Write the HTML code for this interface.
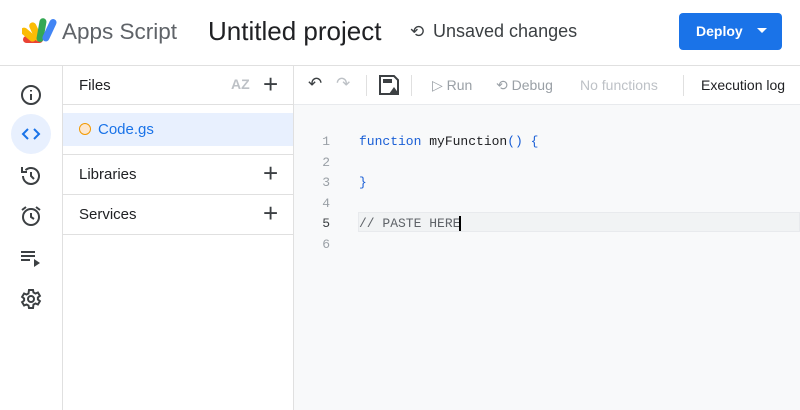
<!DOCTYPE html>
<html><head><style>
*{margin:0;padding:0;box-sizing:border-box}
body{width:800px;height:410px;overflow:hidden;background:#fff;font-family:"Liberation Sans",Arial,sans-serif;color:#3c4043;position:relative}
.a{position:absolute}
.mono{font-family:"Liberation Mono",monospace;font-size:13px}
</style></head><body>
<svg class="a" style="left:22px;top:17px" width="36" height="28" viewBox="0 0 36 28">
<rect x="1" y="19" width="20" height="7" rx="3.5" fill="#ea4335"/>
<rect x="3" y="9" width="7" height="18" rx="3.5" transform="rotate(-50 6 18)" fill="#fbbc04"/>
<rect x="10" y="5" width="7" height="20" rx="3.5" transform="rotate(-25 13 15)" fill="#fbbc04"/>
<rect x="16" y="1" width="7" height="24" rx="3.5" transform="rotate(10 19 13)" fill="#34a853"/>
<rect x="24" y="1" width="7" height="24" rx="3.5" transform="rotate(25 27 13)" fill="#4285f4"/>
</svg>
<div class="a" style="left:62px;top:19px;font-size:22.5px;color:#5f6368">Apps Script</div>
<div class="a" style="left:208px;top:16px;font-size:26px;color:#202124">Untitled project</div>
<div class="a" style="left:410px;top:22px;font-size:17px;color:#3c4043">⟲</div>
<div class="a" style="left:433px;top:21px;font-size:18px;color:#3c4043">Unsaved changes</div>
<div class="a" style="left:679px;top:13px;width:103px;height:37px;background:#1a73e8;border-radius:4px;color:#fff;font-size:14px;font-weight:bold">
<span class="a" style="left:17px;top:10px">Deploy</span>
<span class="a" style="left:78px;top:15px;width:0;height:0;border-left:5px solid transparent;border-right:5px solid transparent;border-top:5px solid #fff"></span></div>
<div class="a" style="left:0;top:65px;width:800px;height:1px;background:#e0e0e0"></div>
<div class="a" style="left:62px;top:66px;width:1px;height:344px;background:#e0e0e0"></div>
<svg class="a" style="left:19px;top:83px" width="24" height="24" viewBox="0 0 24 24" fill="none" stroke="#3c4043" stroke-width="2"><circle cx="12" cy="12" r="9"/><path d="M12 11v6M12 7v1.5"/></svg>
<div class="a" style="left:11px;top:114px;width:40px;height:40px;border-radius:50%;background:#e8f0fe"></div>
<svg class="a" style="left:19px;top:122px" width="24" height="24" viewBox="0 0 24 24" fill="none" stroke="#1a73e8" stroke-width="2"><path d="M9 7l-5 5 5 5M15 7l5 5-5 5"/></svg>
<svg class="a" style="left:19px;top:164px" width="24" height="24" viewBox="0 0 24 24" fill="none" stroke="#3c4043" stroke-width="2"><path d="M4 12a8 8 0 1 0 2.5-5.8M3 3v5h5M12 8v4l3 3"/></svg>
<svg class="a" style="left:19px;top:204px" width="24" height="24" viewBox="0 0 24 24" fill="none" stroke="#3c4043" stroke-width="2"><circle cx="12" cy="13" r="8"/><path d="M12 9v4l3 2M3 6l4-3M21 6l-4-3"/></svg>
<svg class="a" style="left:19px;top:246px" width="24" height="24" viewBox="0 0 24 24" fill="#3c4043"><rect x="2" y="5" width="14" height="2"/><rect x="2" y="9" width="14" height="2"/><rect x="2" y="13" width="9" height="2"/><path d="M15 13l6 4-6 4z"/></svg>
<svg class="a" style="left:19px;top:287px" width="24" height="24" viewBox="0 0 24 24" fill="none" stroke="#3c4043" stroke-width="2"><circle cx="12" cy="12" r="3"/><path d="M10 3h4l.5 2.5 2 1 2.4-1 2 3.4-2 1.6v2l2 1.6-2 3.4-2.4-1-2 1L14 21h-4l-.5-2.5-2-1-2.4 1-2-3.4 2-1.6v-2l-2-1.6 2-3.4 2.4 1 2-1z"/></svg>
<div class="a" style="left:79px;top:77px;font-size:15px;color:#202124">Files</div>
<div class="a" style="left:231px;top:76px;font-size:14px;color:#bdc1c6;font-weight:bold">AZ</div>
<div class="a" style="left:263px;top:69px;font-size:26px;color:#3c4043;font-weight:300">+</div>
<div class="a" style="left:63px;top:104px;width:230px;height:1px;background:#e0e0e0"></div>
<div class="a" style="left:63px;top:113px;width:230px;height:33px;background:#e8f0fe"></div>
<div class="a" style="left:79px;top:123px;width:12px;height:12px;border-radius:50%;border:1.5px solid #f29900;background:#fde7cf"></div>
<div class="a" style="left:98px;top:121px;font-size:15px;color:#1a73e8">Code.gs</div>
<div class="a" style="left:63px;top:154px;width:230px;height:1px;background:#e0e0e0"></div>
<div class="a" style="left:79px;top:166px;font-size:15px;color:#202124">Libraries</div>
<div class="a" style="left:263px;top:158px;font-size:26px;color:#3c4043;font-weight:300">+</div>
<div class="a" style="left:63px;top:194px;width:230px;height:1px;background:#e0e0e0"></div>
<div class="a" style="left:79px;top:206px;font-size:15px;color:#202124">Services</div>
<div class="a" style="left:263px;top:198px;font-size:26px;color:#3c4043;font-weight:300">+</div>
<div class="a" style="left:63px;top:234px;width:230px;height:1px;background:#e0e0e0"></div>
<div class="a" style="left:293px;top:66px;width:1px;height:344px;background:#e0e0e0"></div>
<div class="a" style="left:308px;top:74px;font-size:17px;color:#3c4043">↶</div>
<div class="a" style="left:336px;top:74px;font-size:17px;color:#bdc1c6">↷</div>
<div class="a" style="left:366px;top:75px;width:1px;height:21px;background:#e0e0e0"></div>
<svg class="a" style="left:378px;top:74px" width="22" height="22" viewBox="0 0 22 22"><path d="M2 2h14l4 4v14H2z" fill="none" stroke="#3c4043" stroke-width="2"/><rect x="5" y="5" width="9" height="4" fill="#3c4043"/><path d="M11 20l5-7 5 7z" fill="#3c4043"/></svg>
<div class="a" style="left:411px;top:75px;width:1px;height:21px;background:#e0e0e0"></div>
<div class="a" style="left:432px;top:77px;font-size:14px;color:#9aa0a6">▷ Run</div>
<div class="a" style="left:496px;top:77px;font-size:14px;color:#9aa0a6">⟲ Debug</div>
<div class="a" style="left:580px;top:77px;font-size:14px;color:#bdc1c6">No functions</div>
<div class="a" style="left:683px;top:75px;width:1px;height:21px;background:#e0e0e0"></div>
<div class="a" style="left:701px;top:77px;font-size:14px;color:#202124">Execution log</div>
<div class="a" style="left:294px;top:104px;width:506px;height:1px;background:#e8eaed"></div>
<div class="a" style="left:294px;top:105px;width:506px;height:305px;background:#f8f9fa"></div>
<div class="a" style="left:358px;top:212px;width:442px;height:20px;border:1px solid #e8eaed;background:#f1f3f4"></div>
<div class="a mono" style="left:318px;top:132px;line-height:20.5px;color:#9aa0a6;text-align:right;width:12px">1<br>2<br>3<br>4<br><span style="color:#3c4043">5</span><br>6</div>
<div class="a mono" style="left:359px;top:132px;line-height:20.5px;color:#202124;white-space:pre"><span style="color:#1a5fd6">function</span> myFunction<span style="color:#1a5fd6">() {</span>

<span style="color:#1a5fd6">}</span>

<span style="color:#5f6368">// PASTE HERE</span><span style="border-left:2px solid #000;margin-left:-1px"> </span>
</div>
</body></html>
